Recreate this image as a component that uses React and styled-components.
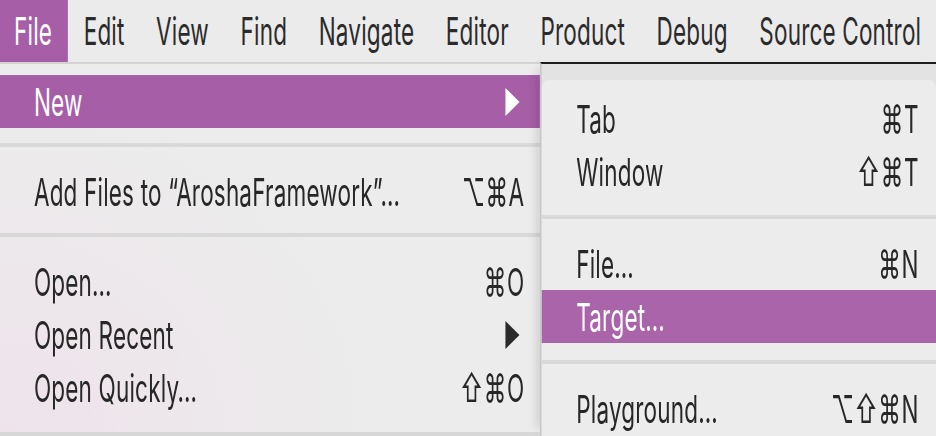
import React from 'react';
import styled, { createGlobalStyle } from 'styled-components';

const GlobalStyle = createGlobalStyle`
  html, body {
    margin: 0;
    width: 936px;
    height: 436px;
    overflow: hidden;
    background: #ececec;
  }
`;

const PURPLE = '#a65ea7';

// the screenshot is squeezed sideways, so the whole stage is laid out wide and scaled on x
const Stage = styled.div`
  width: 1600px;
  height: 436px;
  transform: scaleX(0.585);
  transform-origin: 0 0;
  display: flex;
  flex-direction: column;
  font-family: Inter, "DejaVu Sans", sans-serif;
  font-size: 38.5px;
  letter-spacing: 0.3px;
  white-space: nowrap;
  color: #272727;
`;

const MenuBar = styled.div`
  height: 62px;
  display: flex;
  background: #ebebeb;
  overflow: hidden;
`;

const BarItem = styled.div`
  flex-shrink: 0;
  display: flex;
  align-items: center;
  padding: 0 27px 0 ${(p) => (p.first ? '24px' : '27px')};
  background: ${(p) => (p.active ? PURPLE : 'transparent')};
  color: ${(p) => (p.active ? '#fff' : '#2b2b2b')};
`;

const Body = styled.div`
  flex: 1;
  display: flex;
`;

const FileMenu = styled.div`
  width: 923px;
  flex-shrink: 0;
  border-top: 2px solid #d3d3d3;
  border-bottom: 4px solid #d7d7d7;
  padding: 11px 0 18px;
  background: radial-gradient(ellipse 70% 90% at 0% 100%, #eee3eb 0%, #ececec 100%);
`;

const SubColumn = styled.div`
  flex: 1;
  border-top: 2px solid #1d1d1d;
  border-left: 3px solid #c8c8c8;
  background: #e3e3e3;
  padding-top: 16px;
  box-shadow: -12px 0 14px -8px rgba(0, 0, 0, 0.16);
`;

const SubMenu = styled.div`
  height: 100%;
  background: #ececec;
  border-radius: 12px 12px 0 0 / 8px 8px 0 0;
  padding-top: 12px;
`;

const Item = styled.div`
  height: 53px;
  display: flex;
  align-items: center;
  padding: ${(p) => (p.sub ? '0 29px 0 59px' : '0 26px 0 58px')};
  background: ${(p) => (p.active ? (p.sub ? '#aa64aa' : PURPLE) : 'transparent')};
  color: ${(p) => (p.active ? '#fff' : 'inherit')};
`;

const Shortcut = styled.span`
  margin-left: auto;
  letter-spacing: 1px;
`;

const Arrow = styled.svg`
  margin-left: auto;
  margin-right: 8px;
  width: 26px;
  height: 28px;
`;

const Separator = styled.div`
  height: 4px;
  margin: ${(p) => (p.sub ? '17px 0 18px' : '15px 0 18px')};
  background: #d9d9d9;
`;

const Caret = ({ color }) => (
  <Arrow viewBox="0 0 26 28">
    <path d="M1 0 L25 14 L1 28 Z" fill={color} />
  </Arrow>
);

const barItems = ['File', 'Edit', 'View', 'Find', 'Navigate', 'Editor', 'Product', 'Debug', 'Source Control'];

export default function App() {
  return (
    <>
      <GlobalStyle />
      <Stage>
        <MenuBar>
          {barItems.map((label, i) => (
            <BarItem key={label} first={i === 0} active={i === 0}>
              {label}
            </BarItem>
          ))}
        </MenuBar>
        <Body>
          <FileMenu>
            <Item active>
              New
              <Caret color="#fff" />
            </Item>
            <Separator />
            <Item>
              Add Files to “AroshaFramework”…
              <Shortcut>⌥⌘A</Shortcut>
            </Item>
            <Separator />
            <Item>
              Open…
              <Shortcut>⌘O</Shortcut>
            </Item>
            <Item>
              Open Recent
              <Caret color="#2a2a2a" />
            </Item>
            <Item>
              Open Quickly…
              <Shortcut>⇧⌘O</Shortcut>
            </Item>
          </FileMenu>
          <SubColumn>
            <SubMenu>
              <Item sub>
                Tab
                <Shortcut>⌘T</Shortcut>
              </Item>
              <Item sub>
                Window
                <Shortcut>⇧⌘T</Shortcut>
              </Item>
              <Separator sub />
              <Item sub>
                File…
                <Shortcut>⌘N</Shortcut>
              </Item>
              <Item sub active>
                Target…
              </Item>
              <Separator sub />
              <Item sub>
                Playground…
                <Shortcut>⌥⇧⌘N</Shortcut>
              </Item>
            </SubMenu>
          </SubColumn>
        </Body>
      </Stage>
    </>
  );
}
